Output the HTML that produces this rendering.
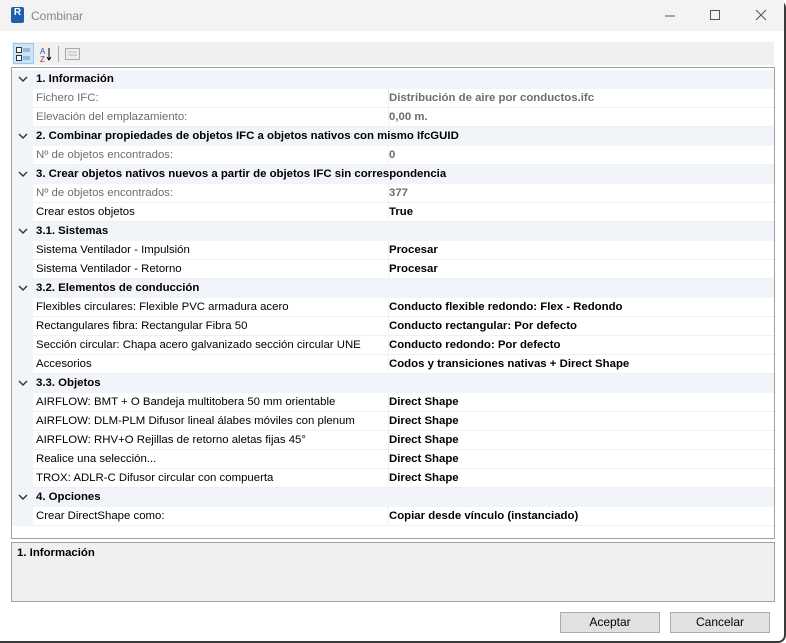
<!DOCTYPE html>
<html><head><meta charset="utf-8"><style>
*{margin:0;padding:0;box-sizing:border-box}
body{width:786px;height:643px;background:#fff;font-family:"Liberation Sans",sans-serif;font-size:11.4px;color:#000;position:relative;overflow:hidden}
.win{position:absolute;left:0;top:0;width:786px;height:643px;border-right:2px solid #3a3a3a;border-bottom:2px solid #3a3a3a;border-radius:0 8px 8px 0}
.title{position:absolute;left:0;top:0;width:784px;height:31px;background:#f3f3f3}
.title .t{position:absolute;left:31px;top:9px;font-size:12px;color:#888}
.logo{position:absolute;left:11px;top:7px;width:13px;height:16px;background:#1f5fae;border-radius:2px;color:#fff;font-weight:bold;font-size:10px;text-align:center;line-height:12px}
.tb{position:absolute;left:12px;top:42px;width:762px;height:23px;background:#f0f0f0}
.grid{position:absolute;left:11px;top:67px;width:764px;height:472px;border:1px solid #a0a0a0;background:#fff}
.row{position:absolute;left:0;width:762px;height:19px;line-height:19px;white-space:nowrap;margin-top:1px}
.cat{background:#f1f4f9;font-weight:bold}
.cat svg{position:absolute;left:6px;top:6px}
.cat .n{position:absolute;left:24px}
.p{position:absolute;left:21px;width:356px;padding-left:3px;border-bottom:1px solid #f0f0f0;border-right:1px solid #f0f0f0;height:19px}
.v{position:absolute;left:377px;width:385px;padding-left:0;font-weight:bold;border-bottom:1px solid #f0f0f0;height:19px}
.m{position:absolute;left:0;width:21px;height:19px;background:#f1f4f9}
.g{color:#6d6d6d}
.g2{color:#6d6d6d}
.desc{position:absolute;left:11px;top:542px;width:764px;height:60px;background:#f0f0f0;border:1px solid #a0a0a0;font-weight:bold;padding:4px 5px}
.btn{position:absolute;top:612px;width:100px;height:21px;background:#e1e1e1;border:1px solid #adadad;text-align:center;line-height:19px;font-size:12px}
</style></head><body>
<div class="win"></div>
<div class="title"><div class="logo">R</div><div class="t">Combinar</div>
<svg style="position:absolute;left:660px;top:9px" width="110" height="14"><line x1="5" y1="7" x2="15" y2="7" stroke="#555"/><rect x="50.5" y="1.5" width="9" height="9" fill="none" stroke="#555"/><path d="M96 1 L106 11 M106 1 L96 11" stroke="#555"/></svg></div>
<div class="tb">
<div style="position:absolute;left:1px;top:1px;width:21px;height:21px;background:#cce4f7;border:1px solid #99c9ef"></div>
<svg style="position:absolute;left:3px;top:3px" width="70" height="18"><rect x="1.5" y="2.5" width="5" height="5" fill="#fff" stroke="#333"/><rect x="1.5" y="10.5" width="5" height="5" fill="#fff" stroke="#333"/><path d="M8 4h7M8 6h7M8 12h7M8 14h7" stroke="#6a8fb8"/><text x="25" y="9" font-size="8" fill="#1f5fae" font-family="Liberation Sans">A</text><text x="25" y="17" font-size="8" fill="#a03030" font-family="Liberation Sans">Z</text><path d="M34 3v12M32 12l2 3 2-3" stroke="#000" fill="none"/><line x1="43.5" y1="1" x2="43.5" y2="17" stroke="#aaa"/><rect x="50.5" y="3.5" width="14" height="11" fill="#eee" stroke="#aaa"/><path d="M53 7h9M53 10h9" stroke="#bbb"/></svg>
</div>
<div class="grid">
<div class="row cat" style="top:1px"><svg width="10" height="7"><path d="M1 1l4 4 4-4" stroke="#333" stroke-width="1.4" fill="none"/></svg><span class="n">1. Información</span></div>
<div class="row" style="top:20px"><div class="m"></div><div class="p g">Fichero IFC:</div><div class="v g2">Distribución de aire por conductos.ifc</div></div>
<div class="row" style="top:39px"><div class="m"></div><div class="p g">Elevación del emplazamiento:</div><div class="v g2">0,00 m.</div></div>
<div class="row cat" style="top:58px"><svg width="10" height="7"><path d="M1 1l4 4 4-4" stroke="#333" stroke-width="1.4" fill="none"/></svg><span class="n">2. Combinar propiedades de objetos IFC a objetos nativos con mismo IfcGUID</span></div>
<div class="row" style="top:77px"><div class="m"></div><div class="p g">Nº de objetos encontrados:</div><div class="v g2">0</div></div>
<div class="row cat" style="top:96px"><svg width="10" height="7"><path d="M1 1l4 4 4-4" stroke="#333" stroke-width="1.4" fill="none"/></svg><span class="n">3. Crear objetos nativos nuevos a partir de objetos IFC sin correspondencia</span></div>
<div class="row" style="top:115px"><div class="m"></div><div class="p g">Nº de objetos encontrados:</div><div class="v g2">377</div></div>
<div class="row" style="top:134px"><div class="m"></div><div class="p">Crear estos objetos</div><div class="v">True</div></div>
<div class="row cat" style="top:153px"><svg width="10" height="7"><path d="M1 1l4 4 4-4" stroke="#333" stroke-width="1.4" fill="none"/></svg><span class="n">3.1. Sistemas</span></div>
<div class="row" style="top:172px"><div class="m"></div><div class="p">Sistema Ventilador - Impulsión</div><div class="v">Procesar</div></div>
<div class="row" style="top:191px"><div class="m"></div><div class="p">Sistema Ventilador - Retorno</div><div class="v">Procesar</div></div>
<div class="row cat" style="top:210px"><svg width="10" height="7"><path d="M1 1l4 4 4-4" stroke="#333" stroke-width="1.4" fill="none"/></svg><span class="n">3.2. Elementos de conducción</span></div>
<div class="row" style="top:229px"><div class="m"></div><div class="p">Flexibles circulares: Flexible PVC armadura acero</div><div class="v">Conducto flexible redondo: Flex - Redondo</div></div>
<div class="row" style="top:248px"><div class="m"></div><div class="p">Rectangulares fibra: Rectangular Fibra 50</div><div class="v">Conducto rectangular: Por defecto</div></div>
<div class="row" style="top:267px"><div class="m"></div><div class="p">Sección circular: Chapa acero galvanizado sección circular UNE</div><div class="v">Conducto redondo: Por defecto</div></div>
<div class="row" style="top:286px"><div class="m"></div><div class="p">Accesorios</div><div class="v">Codos y transiciones nativas + Direct Shape</div></div>
<div class="row cat" style="top:305px"><svg width="10" height="7"><path d="M1 1l4 4 4-4" stroke="#333" stroke-width="1.4" fill="none"/></svg><span class="n">3.3. Objetos</span></div>
<div class="row" style="top:324px"><div class="m"></div><div class="p">AIRFLOW: BMT + O Bandeja multitobera 50 mm orientable</div><div class="v">Direct Shape</div></div>
<div class="row" style="top:343px"><div class="m"></div><div class="p">AIRFLOW: DLM-PLM Difusor lineal álabes móviles con plenum</div><div class="v">Direct Shape</div></div>
<div class="row" style="top:362px"><div class="m"></div><div class="p">AIRFLOW: RHV+O Rejillas de retorno aletas fijas 45°</div><div class="v">Direct Shape</div></div>
<div class="row" style="top:381px"><div class="m"></div><div class="p">Realice una selección...</div><div class="v">Direct Shape</div></div>
<div class="row" style="top:400px"><div class="m"></div><div class="p">TROX: ADLR-C Difusor circular con compuerta</div><div class="v">Direct Shape</div></div>
<div class="row cat" style="top:419px"><svg width="10" height="7"><path d="M1 1l4 4 4-4" stroke="#333" stroke-width="1.4" fill="none"/></svg><span class="n">4. Opciones</span></div>
<div class="row" style="top:438px"><div class="m"></div><div class="p">Crear DirectShape como:</div><div class="v">Copiar desde vínculo (instanciado)</div></div>
</div>
<div class="desc">1. Información</div>
<div class="btn" style="left:560px">Aceptar</div>
<div class="btn" style="left:670px">Cancelar</div>
</body></html>
